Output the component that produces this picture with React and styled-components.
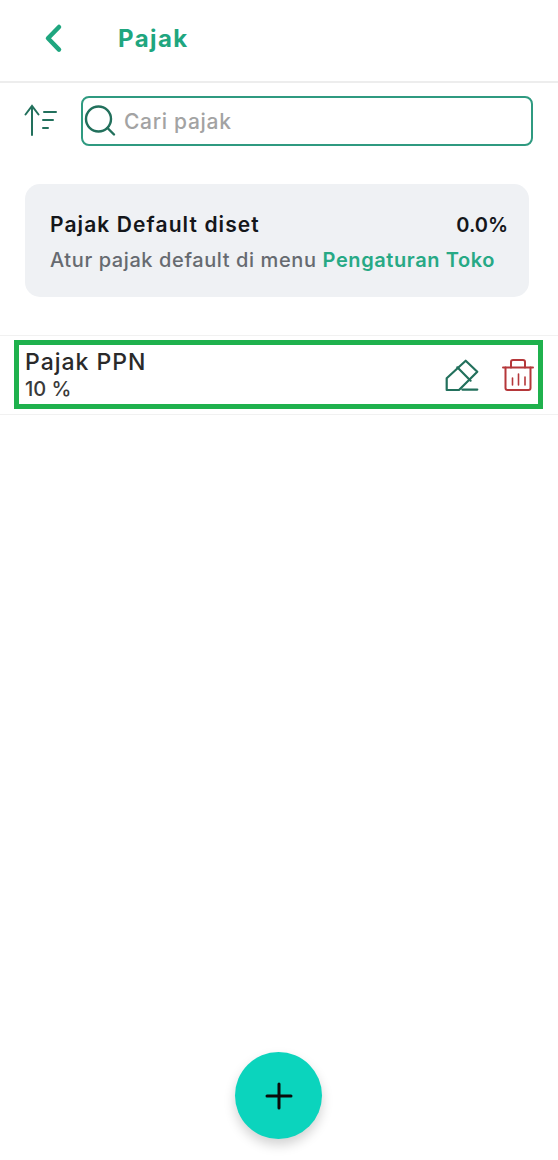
import React from 'react';
import styled, { createGlobalStyle } from 'styled-components';

const GlobalStyle = createGlobalStyle`
  html, body {
    margin: 0;
    padding: 0;
    background: #fff;
    font-family: 'Inter', 'Liberation Sans', sans-serif;
  }
`;

const Page = styled.div`
  position: relative;
  width: 558px;
  height: 1160px;
  overflow: hidden;
  background: #fff;
`;

const Header = styled.header`
  display: flex;
  align-items: center;
  height: 83px;
  padding: 0 0 5px 42px;
  box-sizing: border-box;
  border-bottom: 2px solid #ededed;
`;

const BackButton = styled.div`
  display: flex;
  width: 76px;
`;

const Title = styled.h1`
  margin: 0;
  font-size: 24px;
  font-weight: 700;
  letter-spacing: 1.4px;
  color: #1fa67f;
`;

const SearchRow = styled.div`
  display: flex;
  align-items: center;
  gap: 23px;
  padding: 13px 25px 0 23px;
`;

const SearchBox = styled.div`
  flex: 1;
  display: flex;
  align-items: center;
  gap: 8px;
  height: 50px;
  padding-left: 1px;
  box-sizing: border-box;
  border: 2px solid #2f9a80;
  border-radius: 8px;
`;

const SearchText = styled.span`
  font-size: 21px;
  font-weight: 500;
  letter-spacing: 0.7px;
  color: #a3a3a3;
`;

const DefaultCard = styled.section`
  display: flex;
  flex-direction: column;
  gap: 11px;
  height: 113px;
  margin: 38px 29px 0 25px;
  padding: 28px 21px 0 25px;
  box-sizing: border-box;
  background: #eff1f4;
  border-radius: 15px;
`;

const CardLine = styled.div`
  display: flex;
  justify-content: space-between;
  align-items: center;
`;

const CardTitle = styled.span`
  font-size: 21px;
  font-weight: 600;
  letter-spacing: 1.1px;
  color: #14161a;
`;

const CardValue = styled.span`
  font-size: 20px;
  font-weight: 600;
  color: #14161a;
`;

const CardHint = styled.span`
  font-size: 20px;
  font-weight: 500;
  letter-spacing: 0.6px;
  white-space: nowrap;
  color: #666a70;
`;

const CardLink = styled.span`
  color: #27a985;
  font-weight: 600;
`;

const ListRow = styled.div`
  margin-top: 38px;
  padding: 4px 0 5px;
  border-top: 1px solid #f1f1f1;
  border-bottom: 1px solid #f1f1f1;
`;

const Highlight = styled.div`
  display: flex;
  align-items: center;
  justify-content: space-between;
  width: 529px;
  height: 69px;
  margin-left: 14px;
  padding: 0 4px 0 6px;
  box-sizing: border-box;
  border: 5px solid #1fb14d;
`;

const RowText = styled.div`
  display: flex;
  flex-direction: column;
`;

const RowName = styled.span`
  font-size: 23px;
  line-height: 28px;
  font-weight: 500;
  letter-spacing: 1px;
  color: #2a2a2a;
`;

const RowValue = styled.span`
  font-size: 20px;
  line-height: 26px;
  font-weight: 500;
  color: #3a3a3a;
`;

const RowActions = styled.div`
  display: flex;
  align-items: center;
  gap: 23px;
  margin-top: 2px;
`;

const AddButton = styled.button`
  position: absolute;
  left: 235px;
  top: 1052px;
  display: flex;
  align-items: center;
  justify-content: center;
  width: 87px;
  height: 87px;
  padding: 0;
  border: none;
  border-radius: 50%;
  background: #0bd4bd;
  box-shadow: 0 6px 12px rgba(0, 0, 0, 0.18);
`;

const App = () => (
  <Page>
    <GlobalStyle />
    <Header>
      <BackButton>
        <svg width="22" height="30" viewBox="0 0 22 30" fill="none">
          <path d="M17 4 L6 15.3 L17 26.6" stroke="#1fa67f" strokeWidth="4.5" strokeLinecap="round" strokeLinejoin="round" />
        </svg>
      </BackButton>
      <Title>Pajak</Title>
    </Header>
    <SearchRow>
      <svg width="35" height="34" viewBox="0 0 35 34" fill="none" stroke="#22705c" strokeWidth="2" strokeLinecap="round">
        <path d="M9 31 V2 M2.5 10.5 L9 2 L15.5 10.5" />
        <path d="M21 8 H33 M20 16 H30 M20 24 H25" />
      </svg>
      <SearchBox>
        <svg width="32" height="32" viewBox="0 0 32 32" fill="none" stroke="#22705c" strokeWidth="2.4" strokeLinecap="round">
          <circle cx="14.5" cy="14" r="12.5" />
          <path d="M23.5 23 L30 29.5" />
        </svg>
        <SearchText>Cari pajak</SearchText>
      </SearchBox>
    </SearchRow>
    <DefaultCard>
      <CardLine>
        <CardTitle>Pajak Default diset</CardTitle>
        <CardValue>0.0%</CardValue>
      </CardLine>
      <CardLine>
        <CardHint>
          Atur pajak default di menu <CardLink>Pengaturan Toko</CardLink>
        </CardHint>
      </CardLine>
    </DefaultCard>
    <ListRow>
      <Highlight>
        <RowText>
          <RowName>Pajak PPN</RowName>
          <RowValue>10 %</RowValue>
        </RowText>
        <RowActions>
          <svg width="34" height="33" viewBox="0 0 34 33" fill="none" stroke="#22705c" strokeWidth="2.2" strokeLinejoin="round" strokeLinecap="round">
            <path d="M1.7 19.3 V31 H14 L32.3 12.7 L20.7 1.7 Z" />
            <path d="M12.3 8.3 L25.6 21.7" />
            <path d="M17.3 30.6 H32.3" />
          </svg>
          <svg width="32" height="33" viewBox="0 0 32 33" fill="none" stroke="#b5373a" strokeWidth="2" strokeLinejoin="round" strokeLinecap="round">
            <path d="M1 8.5 H31" />
            <path d="M9 8.5 V3 Q9 1 11 1 H21 Q23 1 23 3 V8.5" />
            <path d="M3.5 8.5 V29 Q3.5 31 5.5 31 H26.5 Q28.5 31 28.5 29 V8.5" />
            <path d="M10.5 26 V19 M16.5 26 V15 M23 26 V18" strokeWidth="1.6" />
          </svg>
        </RowActions>
      </Highlight>
    </ListRow>
    <AddButton aria-label="Tambah">
      <svg width="28" height="28" viewBox="0 0 28 28" fill="none" stroke="#0b0b0b" strokeWidth="3" strokeLinecap="round">
        <path d="M14 2 V26 M2 14 H26" />
      </svg>
    </AddButton>
  </Page>
);

export default App;
